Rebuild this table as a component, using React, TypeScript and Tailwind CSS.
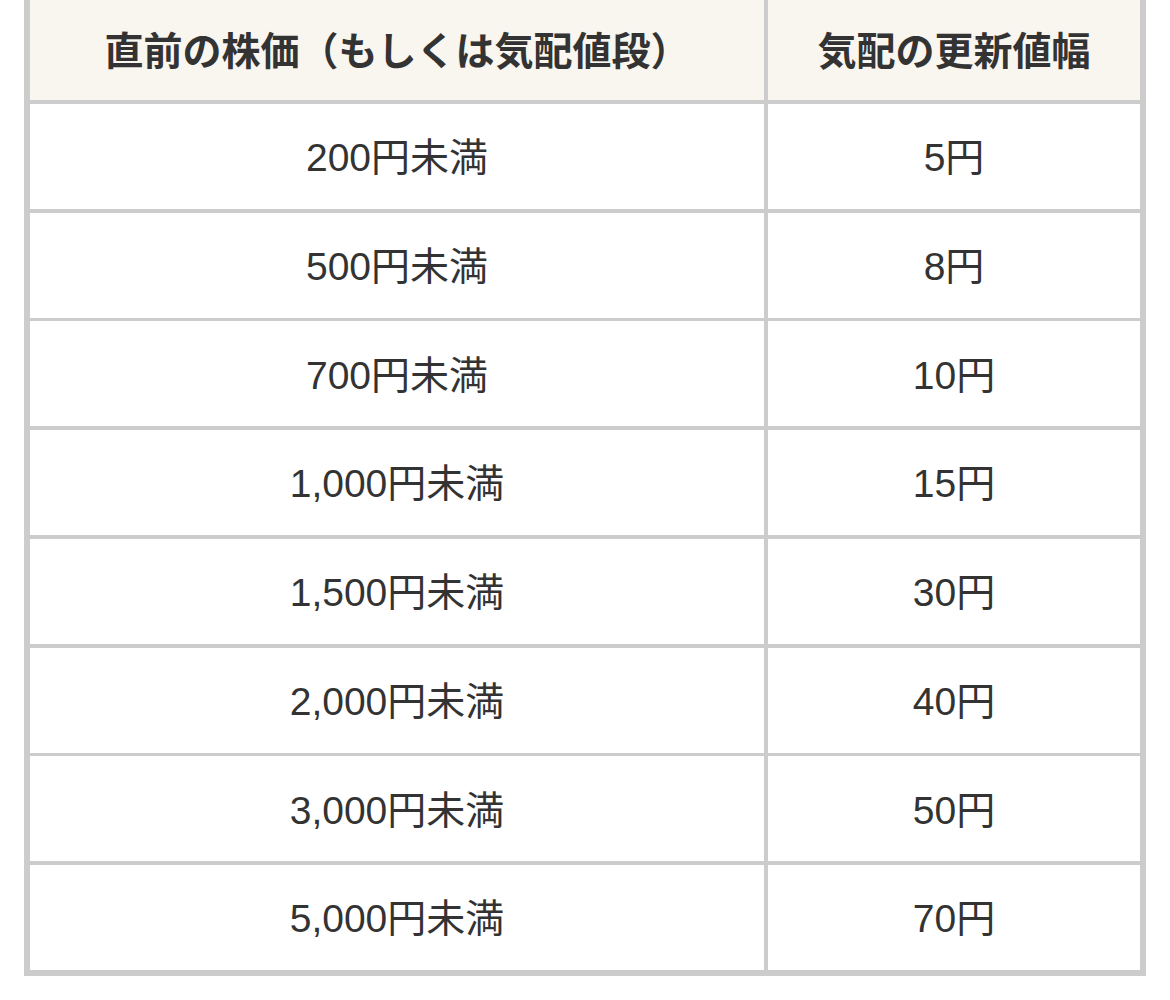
import { Fragment } from 'react'

const rows = [
	{ price: '200円未満', tick: '5円' },
	{ price: '500円未満', tick: '8円' },
	{ price: '700円未満', tick: '10円' },
	{ price: '1,000円未満', tick: '15円' },
	{ price: '1,500円未満', tick: '30円' },
	{ price: '2,000円未満', tick: '40円' },
	{ price: '3,000円未満', tick: '50円' },
	{ price: '5,000円未満', tick: '70円' },
]

export default function App() {
	return (
		<div className="w-[1170px] h-[1000px] bg-white pl-[24px]">
			<div className="w-[1122px] bg-[#cccccc] px-[6px] pb-[6px] grid grid-cols-[734px_372px] gap-x-[4px] gap-y-[3.75px] font-['Liberation_Sans','Noto_Sans_CJK_JP',sans-serif] text-[#333333]">
				<div className="h-[100px] bg-[#f9f5ef] flex items-center justify-center text-[39px] font-bold font-['Noto_Sans_CJK_JP',sans-serif] pb-[4px]">
					直前の株価（もしくは気配値段）
				</div>
				<div className="h-[100px] bg-[#f9f5ef] flex items-center justify-center text-[39px] font-bold font-['Noto_Sans_CJK_JP',sans-serif] pb-[4px]">
					気配の更新値幅
				</div>
				{rows.map(r => (
					<Fragment key={r.price}>
						<div className="h-[105px] bg-white flex items-center justify-center text-[39px] pt-[4px]">
							{r.price}
						</div>
						<div className="h-[105px] bg-white flex items-center justify-center text-[39px] pt-[4px]">
							{r.tick}
						</div>
					</Fragment>
				))}
			</div>
		</div>
	)
}
